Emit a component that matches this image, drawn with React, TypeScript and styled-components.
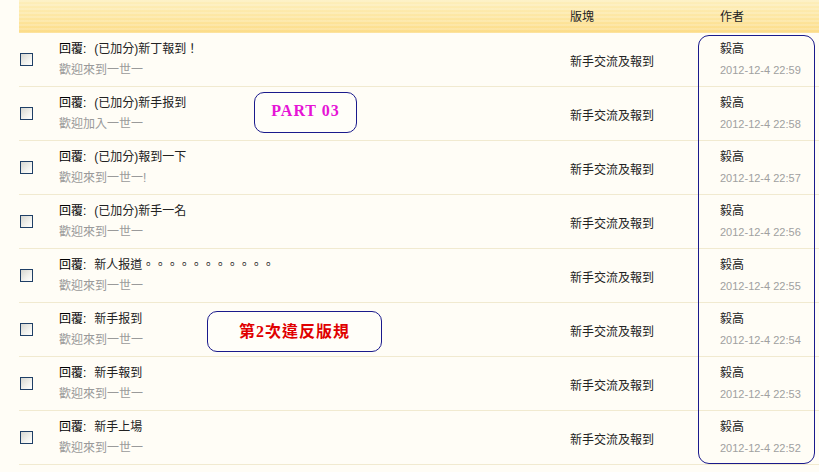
import styled, { createGlobalStyle } from "styled-components";

const GlobalStyle = createGlobalStyle`
  html, body {
    margin: 0;
    padding: 0;
    background: #fffdf6;
    font-family: "Liberation Sans", "Noto Sans CJK TC", sans-serif;
    font-size: 12px;
  }
`;

const rows = [
  { title: "(已加分)新丁報到！", sub: "歡迎來到一世一", time: "22:59" },
  { title: "(已加分)新手报到", sub: "歡迎加入一世一", time: "22:58" },
  { title: "(已加分)報到一下", sub: "歡迎來到一世一!", time: "22:57" },
  { title: "(已加分)新手一名", sub: "歡迎來到一世一", time: "22:56" },
  { title: "新人报道。。。。。。。。。。。", sub: "歡迎來到一世一", time: "22:55" },
  { title: "新手报到", sub: "歡迎來到一世一", time: "22:54" },
  { title: "新手報到", sub: "歡迎來到一世一", time: "22:53" },
  { title: "新手上場", sub: "歡迎來到一世一", time: "22:52" },
];

export default function App() {
  return (
    <>
      <GlobalStyle />
      <Page>
        <Board>
          <Header>
            <span />
            <span />
            <HeadCell>版塊</HeadCell>
            <HeadCell>作者</HeadCell>
          </Header>
          {rows.map((r) => (
            <Row key={r.time}>
              <CheckCell>
                <Check />
              </CheckCell>
              <TopicCell>
                <Title>
                  <b>回覆:</b>
                  {r.title}
                </Title>
                <Sub>{r.sub}</Sub>
              </TopicCell>
              <ForumCell>新手交流及報到</ForumCell>
              <AuthorCell>
                <Name>毅高</Name>
                <Date>2012-12-4 {r.time}</Date>
              </AuthorCell>
            </Row>
          ))}
          <AuthorFrame />
          <Note $top={92} $left={254} $width={103} $color="#e614d6" $spacing={1}>
            PART 03
          </Note>
          <Note $top={311} $left={207} $width={175} $color="#e00000" $spacing={1}>
            第2次違反版規
          </Note>
        </Board>
      </Page>
    </>
  );
}

const Page = styled.div`
  padding-left: 19px;
`;

const Board = styled.div`
  position: relative;
  width: 800px;
`;

const Header = styled.div`
  display: grid;
  grid-template-columns: 40px 511px 150px 1fr;
  align-items: center;
  height: 33px;
  background: repeating-linear-gradient(
      180deg,
      rgba(255, 255, 255, 0.18) 0px,
      rgba(255, 255, 255, 0.18) 2px,
      rgba(255, 255, 255, 0) 2px,
      rgba(255, 255, 255, 0) 4px
    ),
    linear-gradient(180deg, #fdefbc 0%, #fde6a0 55%, #fcdc88 100%);
`;

const HeadCell = styled.span`
  color: #222;
  font-size: 12px;
  padding-bottom: 2px;
`;

const Row = styled.div`
  display: grid;
  grid-template-columns: 40px 511px 150px 1fr;
  align-items: center;
  height: 53px;
  border-bottom: 1px solid #f1ead0;
  background: #fffdf6;
`;

const CheckCell = styled.div`
  display: flex;
  padding-left: 1px;
`;

const Check = styled.span`
  display: block;
  width: 11px;
  height: 11px;
  border: 1px solid #1f3f66;
  background: linear-gradient(135deg, #d6d6d0 0%, #f2f2ee 60%, #ffffff 100%);
`;

const TopicCell = styled.div`
  display: flex;
  flex-direction: column;
  gap: 7px;
  margin-top: -1px;
`;

const Title = styled.div`
  color: #222;
  font-size: 12px;
  line-height: 14px;
  b {
    font-weight: normal;
    color: #000;
    margin-right: 8px;
  }
`;

const Sub = styled.div`
  color: #9a9a9a;
  font-size: 12px;
  line-height: 14px;
`;

const ForumCell = styled.div`
  color: #222;
  font-size: 12px;
  margin-top: 2px;
`;

const AuthorCell = styled.div`
  display: flex;
  flex-direction: column;
  gap: 7px;
  margin-top: -1px;
`;

const Name = styled.div`
  color: #222;
  font-size: 12px;
  line-height: 14px;
`;

const Date = styled.div`
  color: #a0a0a0;
  font-size: 11px;
  line-height: 14px;
`;

const AuthorFrame = styled.div`
  position: absolute;
  top: 35px;
  left: 679px;
  width: 115px;
  height: 427px;
  border: 1px solid #1a1a8c;
  border-radius: 11px;
  pointer-events: none;
`;

const Note = styled.div<{
  $top: number;
  $left: number;
  $width: number;
  $color: string;
  $spacing: number;
}>`
  position: absolute;
  top: ${(p) => p.$top}px;
  left: ${(p) => p.$left - 19}px;
  width: ${(p) => p.$width}px;
  height: 41px;
  box-sizing: border-box;
  border: 1px solid #1a1a8c;
  border-radius: 10px;
  background: #fffef9;
  display: flex;
  align-items: center;
  justify-content: center;
  padding-bottom: 4px;
  color: ${(p) => p.$color};
  font-family: "Liberation Serif", "Noto Sans CJK TC", serif;
  font-weight: bold;
  font-size: 16px;
  letter-spacing: ${(p) => p.$spacing}px;
`;
